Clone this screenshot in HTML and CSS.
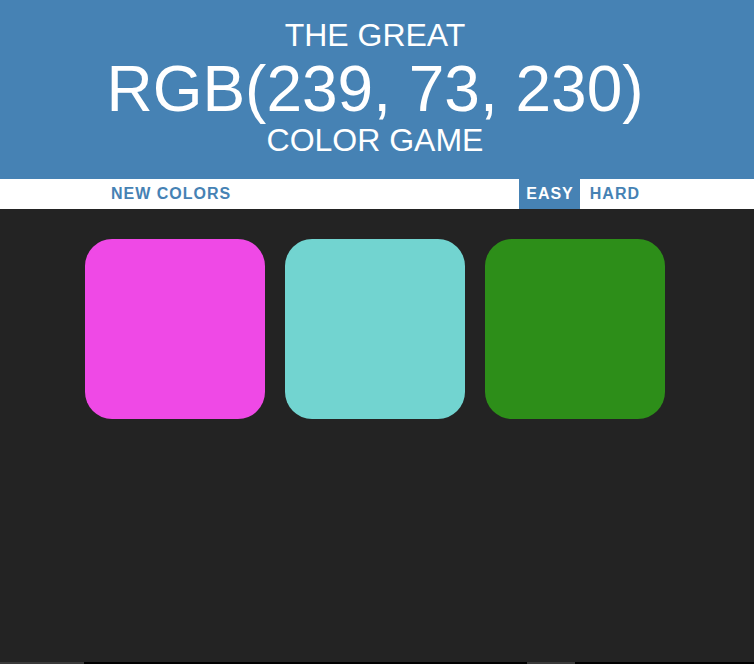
FILE: index.html
```html
<!DOCTYPE html>
<html>
<head>
<meta charset="utf-8">
<title>Color Game</title>
<link rel="stylesheet" href="styles.css">
</head>
<body>
<h1 class="title">
  <span class="line-small line-top">The Great</span>
  <span class="line-big">RGB(239, 73, 230)</span>
  <span class="line-small line-bottom">Color Game</span>
</h1>
<div class="stripe">
  <button class="btn reset">New Colors</button>
  <span class="message"></span>
  <button class="btn mode selected">Easy</button>
  <button class="btn mode hard">Hard</button>
</div>
<div class="board">
  <div class="square" style="background: rgb(239, 73, 230)"></div>
  <div class="square" style="background: rgb(114, 212, 208)"></div>
  <div class="square" style="background: rgb(45, 142, 25)"></div>
</div>
<div class="bottom-edge">
  <span class="edge-piece edge-left"></span>
  <span class="edge-piece edge-right"></span>
</div>
</body>
</html>
```
FILE: styles.css
```css
html, body {
  margin: 0;
  padding: 0;
  height: 100%;
}
body {
  background: #232323;
  font-family: "Liberation Sans", Arial, sans-serif;
  font-size: 16px;
  overflow: hidden;
}
.title {
  margin: 0;
  background: #4682b4;
  color: #fff;
  font-weight: normal;
  text-transform: uppercase;
  text-align: center;
  display: flex;
  flex-direction: column;
  padding: 16px 4px 23px 0;
  height: 179px;
  box-sizing: border-box;
}
.line-small {
  font-size: 32px;
}
.line-top {
  line-height: 38px;
}
.line-bottom {
  line-height: 32px;
}
.line-big {
  font-size: 64px;
  line-height: 70px;
}
.stripe {
  background: #fff;
  height: 30px;
  display: flex;
  justify-content: center;
  padding-right: 3px;
}
.btn {
  border: none;
  background: none;
  font-family: "Liberation Sans", Arial, sans-serif;
  font-size: 16px;
  font-weight: 700;
  letter-spacing: 1px;
  text-transform: uppercase;
  color: #4682b4;
  padding: 0 6px;
  height: 30px;
  line-height: 30px;
  margin: 0;
}
.message {
  width: 282px;
}
.selected {
  background: #4682b4;
  color: #fff;
  padding: 0 6px 0 7px;
}
.hard {
  margin-left: 4px;
}
.board {
  display: flex;
  justify-content: center;
  gap: 20px;
  padding: 30px 4px 0 0;
}
.square {
  width: 180px;
  height: 180px;
  border-radius: 15%;
}
.bottom-edge {
  position: fixed;
  left: 0;
  right: 0;
  bottom: 0;
  height: 2px;
  background: #000;
}
.edge-piece {
  position: absolute;
  top: 0;
  height: 2px;
  background: #3a3a3a;
}
.edge-left {
  left: 0;
  width: 84px;
}
.edge-right {
  left: 527px;
  width: 48px;
}
```
